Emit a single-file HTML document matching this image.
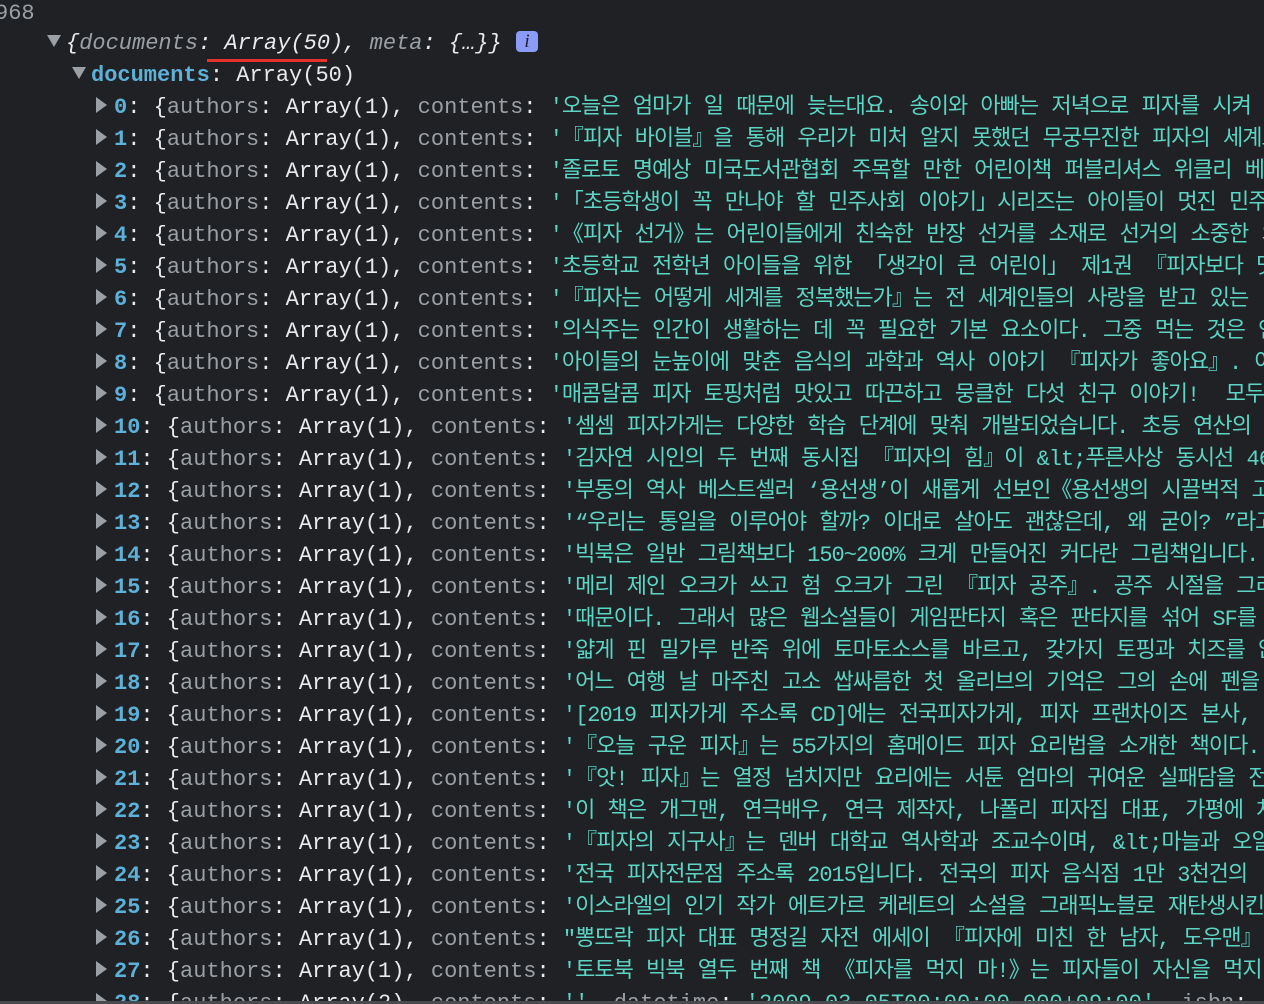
<!DOCTYPE html>
<html><head><meta charset="utf-8"><style>
html,body{margin:0;padding:0;background:#202124;width:1264px;height:1004px;overflow:hidden;}
body{position:relative;font-family:"Liberation Mono","Noto Sans CJK KR",monospace;font-size:22px;color:#e8eaed;}
.r{position:absolute;white-space:pre;height:32px;line-height:32px;margin-top:2px}
.g{color:#9aa0a6}
.b{color:#5db0d7;font-weight:bold}
.s{color:#5cd5c5;letter-spacing:-1px;word-spacing:1px}
.t{display:inline-block;width:0;height:0;border-left:7px solid transparent;border-right:7px solid transparent;border-top:12px solid #9aa0a6;vertical-align:middle;margin-right:5px;position:relative;top:-2px}
.tr{display:inline-block;width:0;height:0;border-top:8px solid transparent;border-bottom:8px solid transparent;border-left:11px solid #9aa0a6;vertical-align:middle;margin-right:7px;position:relative;top:-2px}
i{font-style:italic}
</style></head><body>
<div class="r g" style="left:-5px;top:-4px">968</div>
<div class="r" style="left:47px;top:26px"><span class="t"></span><i>{<span class="g">documents</span>: Array(50), <span class="g">meta</span>: {…}}</i></div>
<div style="position:absolute;left:207px;top:59px;width:120px;height:3px;background:#e8312b"></div>
<div style="position:absolute;left:516px;top:31px;width:22px;height:21px;background:#8b9cf8;border-radius:4px;color:#202124;font:italic 19px 'Liberation Serif',serif;text-align:center;line-height:21px">i</div>
<div class="r" style="left:72px;top:58px"><span class="t"></span><span class="b">documents</span>: Array(50)</div>
<div class="r" style="left:96px;top:90px"><span class="tr"></span><span class="b">0</span>: {<span class="g">authors</span>: Array(1), <span class="g">contents</span>: <span class="s">'오늘은 엄마가 일 때문에 늦는대요. 송이와 아빠는 저녁으로 피자를 시켜</span></div>
<div class="r" style="left:96px;top:122px"><span class="tr"></span><span class="b">1</span>: {<span class="g">authors</span>: Array(1), <span class="g">contents</span>: <span class="s">'『피자 바이블』을 통해 우리가 미처 알지 못했던 무궁무진한 피자의 세계로</span></div>
<div class="r" style="left:96px;top:154px"><span class="tr"></span><span class="b">2</span>: {<span class="g">authors</span>: Array(1), <span class="g">contents</span>: <span class="s">'졸로토 명예상 미국도서관협회 주목할 만한 어린이책 퍼블리셔스 위클리 베스</span></div>
<div class="r" style="left:96px;top:186px"><span class="tr"></span><span class="b">3</span>: {<span class="g">authors</span>: Array(1), <span class="g">contents</span>: <span class="s">'「초등학생이 꼭 만나야 할 민주사회 이야기」시리즈는 아이들이 멋진 민주시민</span></div>
<div class="r" style="left:96px;top:218px"><span class="tr"></span><span class="b">4</span>: {<span class="g">authors</span>: Array(1), <span class="g">contents</span>: <span class="s">'《피자 선거》는 어린이들에게 친숙한 반장 선거를 소재로 선거의 소중한 의미</span></div>
<div class="r" style="left:96px;top:250px"><span class="tr"></span><span class="b">5</span>: {<span class="g">authors</span>: Array(1), <span class="g">contents</span>: <span class="s">'초등학교 전학년 아이들을 위한 「생각이 큰 어린이」 제1권 『피자보다 맛있는</span></div>
<div class="r" style="left:96px;top:282px"><span class="tr"></span><span class="b">6</span>: {<span class="g">authors</span>: Array(1), <span class="g">contents</span>: <span class="s">'『피자는 어떻게 세계를 정복했는가』는 전 세계인들의 사랑을 받고 있는 ‘냉</span></div>
<div class="r" style="left:96px;top:314px"><span class="tr"></span><span class="b">7</span>: {<span class="g">authors</span>: Array(1), <span class="g">contents</span>: <span class="s">'의식주는 인간이 생활하는 데 꼭 필요한 기본 요소이다. 그중 먹는 것은 인</span></div>
<div class="r" style="left:96px;top:346px"><span class="tr"></span><span class="b">8</span>: {<span class="g">authors</span>: Array(1), <span class="g">contents</span>: <span class="s">'아이들의 눈높이에 맞춘 음식의 과학과 역사 이야기 『피자가 좋아요』. 어린</span></div>
<div class="r" style="left:96px;top:378px"><span class="tr"></span><span class="b">9</span>: {<span class="g">authors</span>: Array(1), <span class="g">contents</span>: <span class="s">'매콤달콤 피자 토핑처럼 맛있고 따끈하고 뭉클한 다섯 친구 이야기!  모두</span></div>
<div class="r" style="left:96px;top:410px"><span class="tr"></span><span class="b">10</span>: {<span class="g">authors</span>: Array(1), <span class="g">contents</span>: <span class="s">'셈셈 피자가게는 다양한 학습 단계에 맞춰 개발되었습니다. 초등 연산의 </span></div>
<div class="r" style="left:96px;top:442px"><span class="tr"></span><span class="b">11</span>: {<span class="g">authors</span>: Array(1), <span class="g">contents</span>: <span class="s">'김자연 시인의 두 번째 동시집 『피자의 힘』이 &amp;lt;푸른사상 동시선 46&amp;</span></div>
<div class="r" style="left:96px;top:474px"><span class="tr"></span><span class="b">12</span>: {<span class="g">authors</span>: Array(1), <span class="g">contents</span>: <span class="s">'부동의 역사 베스트셀러 ‘용선생’이 새롭게 선보인《용선생의 시끌벅적 고</span></div>
<div class="r" style="left:96px;top:506px"><span class="tr"></span><span class="b">13</span>: {<span class="g">authors</span>: Array(1), <span class="g">contents</span>: <span class="s">'“우리는 통일을 이루어야 할까? 이대로 살아도 괜찮은데, 왜 굳이? ”라고</span></div>
<div class="r" style="left:96px;top:538px"><span class="tr"></span><span class="b">14</span>: {<span class="g">authors</span>: Array(1), <span class="g">contents</span>: <span class="s">'빅북은 일반 그림책보다 150~200% 크게 만들어진 커다란 그림책입니다.</span></div>
<div class="r" style="left:96px;top:570px"><span class="tr"></span><span class="b">15</span>: {<span class="g">authors</span>: Array(1), <span class="g">contents</span>: <span class="s">'메리 제인 오크가 쓰고 험 오크가 그린 『피자 공주』. 공주 시절을 그리워</span></div>
<div class="r" style="left:96px;top:602px"><span class="tr"></span><span class="b">16</span>: {<span class="g">authors</span>: Array(1), <span class="g">contents</span>: <span class="s">'때문이다. 그래서 많은 웹소설들이 게임판타지 혹은 판타지를 섞어 SF를 </span></div>
<div class="r" style="left:96px;top:634px"><span class="tr"></span><span class="b">17</span>: {<span class="g">authors</span>: Array(1), <span class="g">contents</span>: <span class="s">'얇게 핀 밀가루 반죽 위에 토마토소스를 바르고, 갖가지 토핑과 치즈를 얹</span></div>
<div class="r" style="left:96px;top:666px"><span class="tr"></span><span class="b">18</span>: {<span class="g">authors</span>: Array(1), <span class="g">contents</span>: <span class="s">'어느 여행 날 마주친 고소 쌉싸름한 첫 올리브의 기억은 그의 손에 펜을 </span></div>
<div class="r" style="left:96px;top:698px"><span class="tr"></span><span class="b">19</span>: {<span class="g">authors</span>: Array(1), <span class="g">contents</span>: <span class="s">'[2019 피자가게 주소록 CD]에는 전국피자가게, 피자 프랜차이즈 본사, </span></div>
<div class="r" style="left:96px;top:730px"><span class="tr"></span><span class="b">20</span>: {<span class="g">authors</span>: Array(1), <span class="g">contents</span>: <span class="s">'『오늘 구운 피자』는 55가지의 홈메이드 피자 요리법을 소개한 책이다. 재</span></div>
<div class="r" style="left:96px;top:762px"><span class="tr"></span><span class="b">21</span>: {<span class="g">authors</span>: Array(1), <span class="g">contents</span>: <span class="s">'『앗! 피자』는 열정 넘치지만 요리에는 서툰 엄마의 귀여운 실패담을 전해 </span></div>
<div class="r" style="left:96px;top:794px"><span class="tr"></span><span class="b">22</span>: {<span class="g">authors</span>: Array(1), <span class="g">contents</span>: <span class="s">'이 책은 개그맨, 연극배우, 연극 제작자, 나폴리 피자집 대표, 가평에 차</span></div>
<div class="r" style="left:96px;top:826px"><span class="tr"></span><span class="b">23</span>: {<span class="g">authors</span>: Array(1), <span class="g">contents</span>: <span class="s">'『피자의 지구사』는 덴버 대학교 역사학과 조교수이며, &amp;lt;마늘과 오일: </span></div>
<div class="r" style="left:96px;top:858px"><span class="tr"></span><span class="b">24</span>: {<span class="g">authors</span>: Array(1), <span class="g">contents</span>: <span class="s">'전국 피자전문점 주소록 2015입니다. 전국의 피자 음식점 1만 3천건의 </span></div>
<div class="r" style="left:96px;top:890px"><span class="tr"></span><span class="b">25</span>: {<span class="g">authors</span>: Array(1), <span class="g">contents</span>: <span class="s">'이스라엘의 인기 작가 에트가르 케레트의 소설을 그래픽노블로 재탄생시킨</span></div>
<div class="r" style="left:96px;top:922px"><span class="tr"></span><span class="b">26</span>: {<span class="g">authors</span>: Array(1), <span class="g">contents</span>: <span class="s">"뽕뜨락 피자 대표 명정길 자전 에세이 『피자에 미친 한 남자, 도우맨』. 저</span></div>
<div class="r" style="left:96px;top:954px"><span class="tr"></span><span class="b">27</span>: {<span class="g">authors</span>: Array(1), <span class="g">contents</span>: <span class="s">'토토북 빅북 열두 번째 책 《피자를 먹지 마!》는 피자들이 자신을 먹지 말</span></div>
<div class="r" style="left:96px;top:986px"><span class="tr"></span><span class="b">28</span>: {<span class="g">authors</span>: Array(2), <span class="g">contents</span>: <span class="s">''</span>, <span class="g">datetime</span>: <span class="s" style="letter-spacing:0">'2009-03-05T00:00:00.000+09:00'</span>, <span class="g">isbn</span>: </div>
<div style="position:absolute;left:0;top:1001px;width:1264px;height:3px;background:#4a4b4e"></div>
</body></html>
